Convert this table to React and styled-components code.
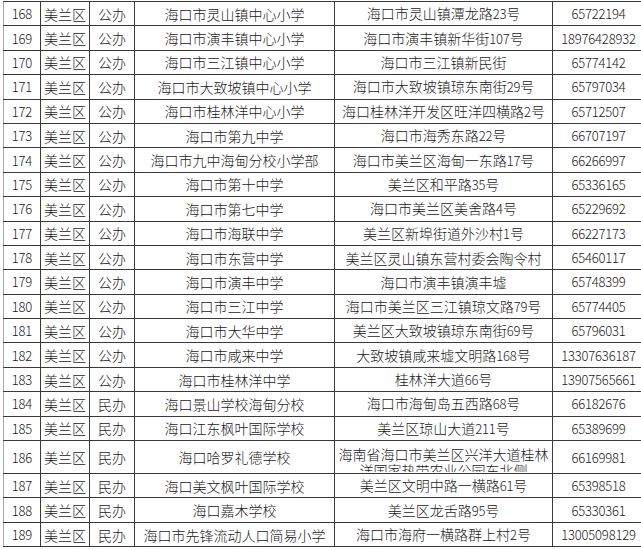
import React from 'react';
import styled, { createGlobalStyle } from 'styled-components';

const schools = [
    ['168', '美兰区', '公办', '海口市灵山镇中心小学', '海口市灵山镇潭龙路23号', '65722194'],
    ['169', '美兰区', '公办', '海口市演丰镇中心小学', '海口市演丰镇新华街107号', '18976428932'],
    ['170', '美兰区', '公办', '海口市三江镇中心小学', '海口市三江镇新民街', '65774142'],
    ['171', '美兰区', '公办', '海口市大致坡镇中心小学', '海口市大致坡镇琼东南街29号', '65797034'],
    ['172', '美兰区', '公办', '海口市桂林洋中心小学', '海口桂林洋开发区旺洋四横路2号', '65712507'],
    ['173', '美兰区', '公办', '海口市第九中学', '海口市海秀东路22号', '66707197'],
    ['174', '美兰区', '公办', '海口市九中海甸分校小学部', '海口市美兰区海甸一东路17号', '66266997'],
    ['175', '美兰区', '公办', '海口市第十中学', '美兰区和平路35号', '65336165'],
    ['176', '美兰区', '公办', '海口市第七中学', '海口市美兰区美舍路4号', '65229692'],
    ['177', '美兰区', '公办', '海口市海联中学', '美兰区新埠街道外沙村1号', '66227173'],
    ['178', '美兰区', '公办', '海口市东营中学', '美兰区灵山镇东营村委会陶令村', '65460117'],
    ['179', '美兰区', '公办', '海口市演丰中学', '海口市演丰镇演丰墟', '65748399'],
    ['180', '美兰区', '公办', '海口市三江中学', '海口市美兰区三江镇琼文路79号', '65774405'],
    ['181', '美兰区', '公办', '海口市大华中学', '美兰区大致坡镇琼东南街69号', '65796031'],
    ['182', '美兰区', '公办', '海口市咸来中学', '大致坡镇咸来墟文明路168号', '13307636187'],
    ['183', '美兰区', '公办', '海口市桂林洋中学', '桂林洋大道66号', '13907565661'],
    ['184', '美兰区', '民办', '海口景山学校海甸分校', '海口市海甸岛五西路68号', '66182676'],
    ['185', '美兰区', '民办', '海口江东枫叶国际学校', '美兰区琼山大道211号', '65389699'],
    ['186', '美兰区', '民办', '海口哈罗礼德学校', '海南省海口市美兰区兴洋大道桂林洋国家热带农业公园东北侧', '66169981'],
    ['187', '美兰区', '民办', '海口美文枫叶国际学校', '美兰区文明中路一横路61号', '65398518'],
    ['188', '美兰区', '民办', '海口嘉木学校', '美兰区龙舌路95号', '65330361'],
    ['189', '美兰区', '民办', '海口市先锋流动人口简易小学', '海口市海府一横路群上村2号', '13005098129'],
];

const colWidths = [37, 49, 45, 200, 218, 92];

// digits are a touch narrower than the CJK text, like the half-width digits of the sheet
const withDigits = (text) =>
    text.split(/(\d+)/).map((part, i) =>
        /^\d+$/.test(part) ? <Num key={i}>{part}</Num> : part
    );

const App = () => {
    return (
        <>
            <GlobalStyle />
            <Sheet>
                <Table>
                    <colgroup>
                        {colWidths.map((w, i) => (
                            <col key={i} style={{ width: w }} />
                        ))}
                    </colgroup>
                    <tbody>
                        {schools.map((row) => {
                            const tall = row[4].length > 15;
                            return (
                                <Row key={row[0]} $tall={tall}>
                                    {row.map((cell, i) => (
                                        <Cell key={i} $first={i === 0}>
                                            {tall && i === 4 ? (
                                                <Wrapped>{withDigits(cell)}</Wrapped>
                                            ) : (
                                                withDigits(cell)
                                            )}
                                        </Cell>
                                    ))}
                                </Row>
                            );
                        })}
                    </tbody>
                </Table>
            </Sheet>
        </>
    );
};

const GlobalStyle = createGlobalStyle`
    html, body {
        margin: 0;
        padding: 0;
        background: #ffffff;
        overflow: hidden;
    }
    body {
        font-family: "Noto Sans CJK SC", "Liberation Sans", sans-serif;
        color: #111;
    }
`;

const Sheet = styled.div`
    width: 641px;
    height: 550px;
    overflow: hidden;
    padding: 1px 0 0 3px;
    box-sizing: border-box;
`;

const Table = styled.table`
    border-collapse: collapse;
    table-layout: fixed;
    width: 641px;
`;

const Row = styled.tr`
    height: ${(p) => (p.$tall ? '33px' : '24.4px')};
`;

const Cell = styled.td`
    border: 1px solid #3a3a3a;
    border-left-color: ${(p) => (p.$first ? '#a8a8a8' : '#3a3a3a')};
    padding: 0 1px;
    text-align: center;
    vertical-align: middle;
    white-space: nowrap;
    overflow: hidden;
    font-size: 14px;
    font-weight: 300;
    line-height: 16px;
    color: #1a1a1a;
`;

const Wrapped = styled.div`
    box-sizing: border-box;
    white-space: normal;
    height: 30px;
    padding-top: 4px;
    line-height: 16px;
    overflow: hidden;
    word-break: break-all;
    text-align: center;
`;

const Num = styled.span`
    font-size: 13px;
    font-weight: 300;
    letter-spacing: -0.2px;
`;

export default App;
